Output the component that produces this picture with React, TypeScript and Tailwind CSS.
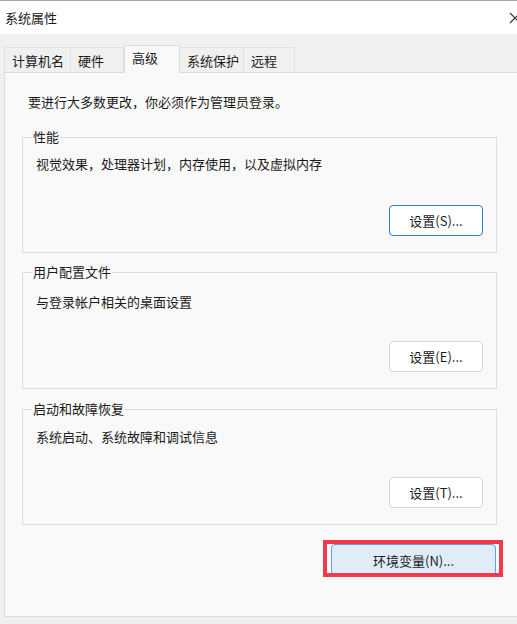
const font = "font-['Noto_Sans_CJK_SC','Noto_Sans',sans-serif]";

type Tab = { label: string; width: string; active?: boolean };

const tabs: Tab[] = [
  { label: "计算机名", width: "w-[67px]" },
  { label: "硬件", width: "w-[54px]" },
  { label: "高级", width: "w-[56px]", active: true },
  { label: "系统保护", width: "w-[65px]" },
  { label: "远程", width: "w-[52px]" },
];

function SettingsButton({ label, focused }: { label: string; focused?: boolean }) {
  return (
    <button
      className={`w-[94px] h-[31px] rounded-[4px] bg-white text-[13px] text-[#1b1b1b] ${
        focused ? "border border-[#2f7fd3]" : "border border-[#d4d4d4]"
      }`}
    >
      {label}
    </button>
  );
}

function Group({
  title,
  desc,
  button,
  focused,
  textPt,
  btnMt,
}: {
  title: string;
  desc: string;
  button: string;
  focused?: boolean;
  textPt: string;
  btnMt: string;
}) {
  return (
    <fieldset className="border border-[#dcdcdc] px-[9px] pb-[16px]">
      <legend className="px-[1px] leading-[18px]">{title}</legend>
      <p className={`pl-[4px] leading-[18px] ${textPt}`}>{desc}</p>
      <div className={`flex justify-end pr-[4px] ${btnMt}`}>
        <SettingsButton label={button} focused={focused} />
      </div>
    </fieldset>
  );
}

export default function App() {
  return (
    <div
      className={`w-[517px] h-[624px] bg-[#f0f0f0] overflow-hidden flex flex-col text-[13px] text-[#1b1b1b] ${font}`}
    >
      {/* Title bar */}
      <div className="h-[34px] shrink-0 bg-white border-t border-[#a6a6a6] flex items-center justify-between pl-[5px]">
        <span className="leading-[18px]">系统属性</span>
        <svg width="12" height="12" viewBox="0 0 12 12" className="-mr-[4px] mt-[1px]">
          <path d="M1 1 L11 11 M11 1 L1 11" stroke="#333" strokeWidth="1.2" />
        </svg>
      </div>

      {/* Tabs */}
      <div className="h-[38px] shrink-0 flex items-end pl-[4px]">
        {tabs.map((t) =>
          t.active ? (
            <div
              key={t.label}
              className={`${t.width} h-[28px] -mb-px relative z-10 bg-[#f9f9f9] border border-b-0 border-[#dcdcdc] pl-[7px] pt-[3px] leading-[18px]`}
            >
              {t.label}
            </div>
          ) : (
            <div
              key={t.label}
              className={`${t.width} h-[25px] -ml-px first:ml-0 bg-[#f0f0f0] border border-b-0 border-[#e2e2e2] pl-[7px] pt-[4px] leading-[18px]`}
            >
              {t.label}
            </div>
          )
        )}
      </div>

      {/* Panel */}
      <div className="ml-[4px] h-[545px] shrink-0 bg-[#f9f9f9] border border-r-0 border-[#dcdcdc]">
        <div className="w-[475px] ml-[17px] pt-[20px] flex flex-col">
          <p className="pl-[6px] leading-[18px]">要进行大多数更改，你必须作为管理员登录。</p>

          <div className="mt-[17px] flex flex-col">
            <Group
              title="性能"
              desc="视觉效果，处理器计划，内存使用，以及虚拟内存"
              button="设置(S)..."
              focused
              textPt="pt-[9px]"
              btnMt="mt-[32px]"
            />
            <div className="mt-[10px]">
              <Group
                title="用户配置文件"
                desc="与登录帐户相关的桌面设置"
                button="设置(E)..."
                textPt="pt-[12px]"
                btnMt="mt-[30px]"
              />
            </div>
            <div className="mt-[11px]">
              <Group
                title="启动和故障恢复"
                desc="系统启动、系统故障和调试信息"
                button="设置(T)..."
                textPt="pt-[10px]"
                btnMt="mt-[31px]"
              />
            </div>
          </div>

          <div className="mt-[15px] flex justify-end -mr-[6px]">
            <div className="w-[180px] h-[37px] border-4 border-[#f2384d] pl-[4px] pr-[3px] overflow-hidden">
              <button className="w-full h-[32px] rounded-[4px] bg-[#e0edf9] border border-[#5aa2e6] text-[13px] text-[#1b1b1b] pt-[1px]">
                环境变量(N)...
              </button>
            </div>
          </div>
        </div>
      </div>
    </div>
  );
}
